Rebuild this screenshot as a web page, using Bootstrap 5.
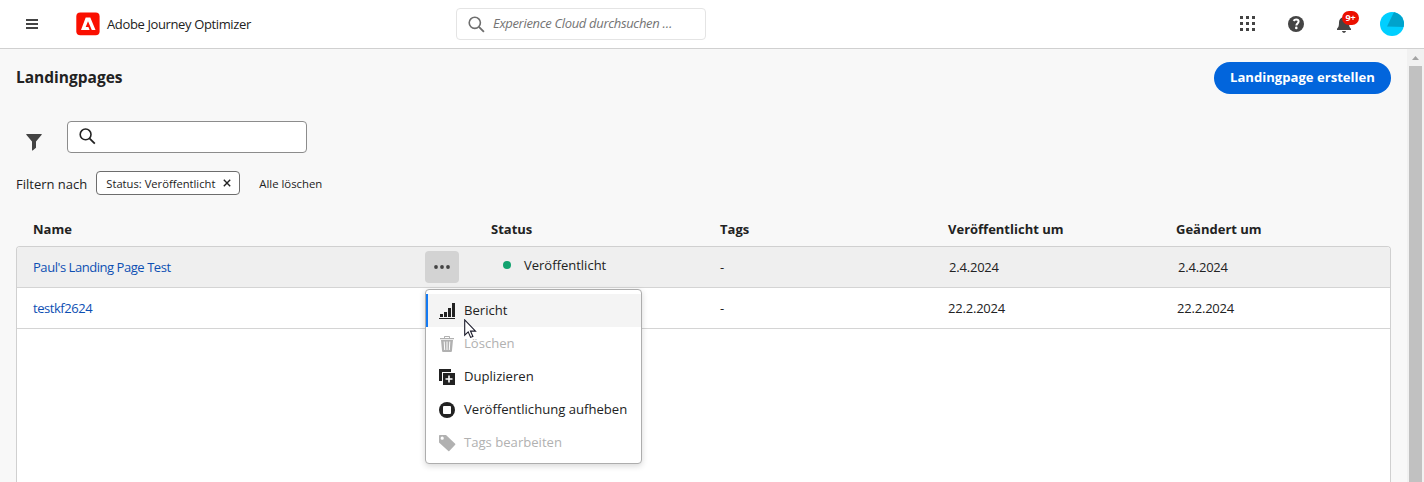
<!DOCTYPE html>
<html lang="de">
<head>
<meta charset="utf-8">
<title>Landingpages</title>
<link href="https://cdn.jsdelivr.net/npm/bootstrap@5.3.0/dist/css/bootstrap.min.css" rel="stylesheet">
<style>
body{font-family:"Open Sans","Noto Sans",sans-serif;font-size:13px;line-height:20px;color:#222;background:#f8f8f8;height:482px;overflow:hidden}
svg{flex:none;display:block}
.t{white-space:nowrap;display:inline-block}
.topbar{height:49px;background:#fff;border-bottom:1px solid #d0d0d0;padding:0 20px 0 26px}
.burger{margin-top:1px}
.logo{margin-left:38px}
.brand-name{margin-left:7px;letter-spacing:-.37px}
.cloud-search{width:250px;height:32px;border:1px solid #e4e4e4;border-radius:4px;padding-left:11px;color:#747474;font-style:italic;letter-spacing:-.33px;left:456px;top:8px}
.cloud-search .t{margin-left:8px;margin-top:-2px}
.tools{gap:33px}
.apps{margin-bottom:1px}
.alerts{margin:0 -5px 0 -1px}
.count{left:6px;top:-5px;width:17px;height:14px;border-radius:7px;background:#eb1000;color:#fff;font-weight:700;font-size:9px;line-height:14px;letter-spacing:-.2px}
.page-body{height:433px}
.content{padding:13px 16px 0}
.page-title{font-size:15.5px;font-weight:700;line-height:20px;padding-top:5px}
.create{height:32px;width:177px;border-radius:16px;background:#0265dc;color:#fff;font-weight:700;font-size:13.1px;line-height:20px;padding:5px 0 7px;border:0}
.tool-line{margin-top:27px;padding-left:10px}
.funnel{margin-top:10px}
.finder{width:240px;height:32px;border:1px solid #8c8c8c;border-radius:4px;background:#fff;padding:0 0 2px 11px;margin-left:25px}
.filters{margin-top:18px;height:24px}
.filters>.t{margin-top:2px}
.chip{height:24px;width:144px;border:1px solid #6d6d6d;border-radius:4px;background:#fff;font-size:11.2px;padding-left:9px;margin-left:9px;gap:8px}
.chip .t{padding-top:1px}
.clear-all{font-size:11.35px;margin-left:19px}
.tgrid{display:grid;grid-template-columns:391px 67px 229px 228px 229px 1fr;align-items:center}
.thead-line{height:34px;padding-left:17px;font-weight:700;margin-top:17px}
.tbody-box{border:1px solid #d0d0d0;border-bottom:0;border-radius:4px 4px 0 0;background:#fff;height:240px}
.thead-line span:last-child{margin-left:-1px}
.trow{height:41px;padding-left:16px;border-bottom:1px solid #d4d4d4}
.trow.hot{background:#efefef;border-radius:3px 3px 0 0}
.item-link{color:#0d4fb3;letter-spacing:-.45px}
.date{letter-spacing:-.2px}
.date.short{padding-left:1px}
.more{width:34px;height:32px;border-radius:4px;background:#d3d3d3;margin-left:1px}
.state{gap:13px;padding-left:12px;margin-bottom:4px}
.dot{width:8px;height:8px;background:#12a36f}
.menu{left:0;top:38px;width:217px;height:175px;background:#fff;border:1px solid #adadad;border-radius:4px;padding:4px 0;box-shadow:0 2px 6px rgba(0,0,0,.16);z-index:5}
.mitem{height:33px;padding-left:13px;gap:9px;font-size:13.1px}
.mitem .t{margin-top:-2px}
.mitem.on{background:#f4f4f4;border-left:2px solid #147af3;padding-left:11px}
.mitem.off{color:#b1b1b1}
.pointer{left:38px;top:29px}
.track{width:17px;background:#f1f1f1}
.thumb{margin:0 2px;background:#c1c1c1}
</style>
</head>
<body>
<header class="topbar d-flex align-items-center position-relative">
  <svg class="burger" width="12" height="12" viewBox="0 0 12 12" fill="#444"><path d="M0 0h12v2H0zM0 4h12v2H0zM0 8h12v2H0z"/></svg>
  <svg class="logo" width="24" height="24" viewBox="0 0 24 24"><rect x=".3" y=".6" width="23.300" height="22.600" rx="4" fill="#fa0f00"/><path fill="#fff" fill-rule="evenodd" d="M9.700 5.600h4.600l5.200 12.300h-3.700l-1.500-3.400-2.300-5.200-2.300 5.700h2.700l1.200 2.900H5z"/></svg>
  <span class="brand-name t">Adobe Journey Optimizer</span>
  <div class="cloud-search position-absolute d-flex align-items-center">
    <svg width="17" height="17" viewBox="0 0 17 17" fill="none" stroke="#6e6e6e" stroke-width="1.600"><circle cx="6.800" cy="6.800" r="5.600"/><path d="M10.900 10.900l5 5" stroke-width="1.900"/></svg>
    <span class="t">Experience Cloud durchsuchen …</span>
  </div>
  <div class="tools ms-auto d-flex align-items-center">
    <svg class="apps" width="15" height="15" viewBox="0 0 15 15" fill="#444"><path d="M0 0h3v3H0zM6 0h3v3H6zM12 0h3v3h-3zM0 6h3v3H0zM6 6h3v3H6zM12 6h3v3h-3zM0 12h3v3H0zM6 12h3v3H6zM12 12h3v3h-3z"/></svg>
    <svg width="16" height="16" viewBox="0 0 16 16"><circle cx="8" cy="8" r="8" fill="#444"/><path d="M5.500 4.900C6.200 4 7.200 3.600 8.100 3.600c1.500 0 2.500.8 2.500 2 0 1.700-2.200 2-2.200 3.800" fill="none" stroke="#fff" stroke-width="2"/><circle cx="8.300" cy="11.900" r="1.300" fill="#fff"/></svg>
    <div class="alerts position-relative">
      <svg width="16" height="17" viewBox="0 0 16 17" fill="#444"><path d="M8 0c.8 0 1.200.5 1.200 1.200C11.700 1.900 13 4 13 6.500c0 4 .8 5 2 6.300V14H1v-1.200c1.200-1.300 2-2.300 2-6.300C3 4 4.300 1.900 6.800 1.200 6.800.5 7.200 0 8 0zM6 15h4c-.2 1.200-1 1.800-2 1.800S6.200 16.200 6 15z"/></svg>
      <span class="count position-absolute text-center">9+</span>
    </div>
    <svg width="24" height="24" viewBox="0 0 24 24"><defs><clipPath id="avatar"><circle cx="12" cy="12" r="12"/></clipPath></defs><g clip-path="url(#avatar)"><path fill="#00cfff" d="M0 0h24v24H0z"/><path fill="#00a3cc" d="M14 0L7 14.500l17 .5V0z"/></g></svg>
  </div>
</header>
<div class="page-body d-flex">
  <main class="content flex-grow-1">
    <div class="d-flex justify-content-between">
      <h1 class="page-title mb-0"><span class="t">Landingpages</span></h1>
      <button class="create"><span class="t">Landingpage erstellen</span></button>
    </div>
    <div class="tool-line d-flex align-items-center">
      <svg class="funnel" width="16" height="17" viewBox="0 0 16 17" fill="#444"><path d="M.6 0h14.800c.4 0 .5.400.3.700L10 7.500v6.300l-3.300 2.700c-.3.200-.7.100-.7-.300V7.500L.3.700C.1.400.2 0 .6 0z"/></svg>
      <div class="finder d-flex align-items-center">
        <svg width="17" height="17" viewBox="0 0 17 17" fill="none" stroke="#222" stroke-width="1.600"><circle cx="6.600" cy="6.400" r="5.400"/><path d="M10.500 10.300l5.300 5.300" stroke-width="1.800"/></svg>
      </div>
    </div>
    <div class="filters d-flex align-items-center">
      <span class="t">Filtern nach</span>
      <div class="chip d-flex align-items-center"><span class="t">Status: Veröffentlicht</span>
        <svg width="8" height="8" viewBox="0 0 8 8" stroke="#222" stroke-width="1.400"><path d="M.8.800l6.400 6.400M7.200.800L.8 7.200"/></svg></div>
      <span class="clear-all t">Alle löschen</span>
    </div>
    <div class="thead-line tgrid">
      <span>Name</span><span></span><span>Status</span><span>Tags</span><span>Veröffentlicht um</span><span>Geändert um</span>
    </div>
    <div class="tbody-box">
      <div class="trow hot tgrid">
        <span class="item-link t">Paul's Landing Page Test</span>
        <div class="more position-relative d-flex align-items-center justify-content-center">
          <svg width="16" height="4" viewBox="0 0 16 4" fill="#444"><circle cx="2" cy="2" r="1.900"/><circle cx="8" cy="2" r="1.900"/><circle cx="14" cy="2" r="1.900"/></svg>
          <div class="menu position-absolute">
            <div class="mitem on d-flex align-items-center">
              <svg width="16" height="16" viewBox="0 0 16 16" fill="#222"><path d="M0 15h16v1H0zM1 11h3v3H1zM5 9h3v5H5zM9 5h3v9H9zM13 0h3v14h-3z"/></svg><span class="t">Bericht</span>
            </div>
            <div class="mitem off d-flex align-items-center">
              <svg width="16" height="16" viewBox="0 0 16 16"><path fill="#b1b1b1" fill-rule="evenodd" d="M1 2h4V.8C5 .3 5.300 0 5.800 0h4.400c.5 0 .8.300.8.800V2h4v1.200H1zM6 1v1h4V1zM2 4h12l-1.100 11.200c-.1.500-.4.800-.9.800H4c-.5 0-.8-.3-.9-.8z"/><path stroke="#fff" d="M5.200 5.500l.5 8.500M8 5.500V14M10.800 5.500l-.5 8.500"/></svg><span class="t">Löschen</span>
            </div>
            <div class="mitem d-flex align-items-center">
              <svg width="16" height="16" viewBox="0 0 16 16"><path fill="#222" d="M0 0h12v3H3v9H0zM4 4h12v12H4z"/><path stroke="#fff" stroke-width="1.600" d="M10 6.500v7M6.500 10h7"/></svg><span class="t">Duplizieren</span>
            </div>
            <div class="mitem d-flex align-items-center">
              <svg width="16" height="16" viewBox="0 0 16 16"><circle cx="8" cy="8" r="8" fill="#222"/><rect x="4" y="4" width="8" height="8" rx="1" fill="#fff"/></svg><span class="t">Veröffentlichung aufheben</span>
            </div>
            <div class="mitem off d-flex align-items-center">
              <svg width="16" height="16" viewBox="0 0 16 16" overflow="visible"><path fill="#b1b1b1" fill-rule="evenodd" d="M0 .8C0 .3.300 0 .8 0H7l9.200 8.800c.3.300.3.700 0 1L10.300 16c-.3.300-.7.300-1 0L0 7.500zM3.200 1.600a1.600 1.600 0 100 3.200 1.600 1.600 0 000-3.200z"/></svg><span class="t">Tags bearbeiten</span>
            </div>
            <svg class="pointer position-absolute" width="13" height="20" viewBox="0 0 13 20"><path d="M.7.900v15.300l3.500-3.300 2.400 5.500 2.300-1-2.400-5.300h5z" fill="#fff" stroke="#1b1b2b" stroke-width="1.100"/></svg>
          </div>
        </div>
        <div class="state d-flex align-items-center"><span class="dot rounded-circle"></span><span class="t">Veröffentlicht</span></div>
        <span>-</span><span class="date short t">2.4.2024</span><span class="date short t">2.4.2024</span>
      </div>
      <div class="trow tgrid">
        <span class="item-link t">testkf2624</span><span></span><span></span><span>-</span><span class="date t">22.2.2024</span><span class="date t">22.2.2024</span>
      </div>
    </div>
  </main>
  <aside class="track">
    <svg width="17" height="17" viewBox="0 0 17 17"><path fill="#a3a3a3" d="M5 11h7L8.500 7z"/></svg>
    <div class="thumb h-100"></div>
  </aside>
</div>
<script src="https://cdn.jsdelivr.net/npm/bootstrap@5.3.0/dist/js/bootstrap.bundle.min.js"></script>
</body>
</html>
